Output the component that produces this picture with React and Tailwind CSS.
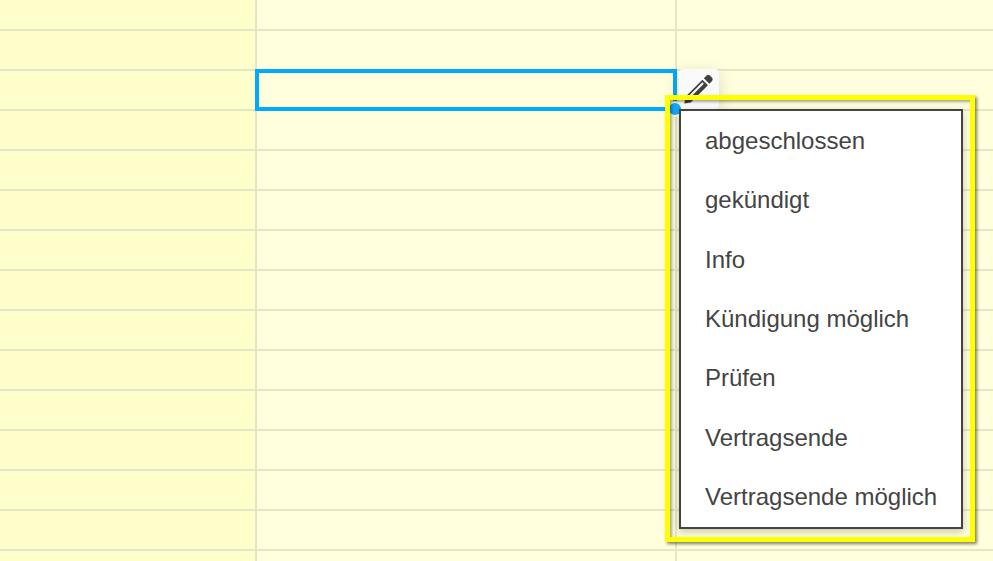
const options = [
  'abgeschlossen',
  'gekündigt',
  'Info',
  'Kündigung möglich',
  'Prüfen',
  'Vertragsende',
  'Vertragsende möglich',
];

const rows = Array.from({ length: 15 }, (_, i) => i);
const selectedRow = 2;

function PencilIcon() {
  return (
    <svg viewBox="0 0 40 40" className="h-10 w-10" fill="#404040">
      <path d="M24.9 9.2l2.8-2.7q1.6-1.3 3.1 0l2.3 2.3q1.3 1.6 0 3.1l-2.7 2.8z" />
      <path
        fillRule="evenodd"
        d="M23.4 10.7L28.9 16.2 11.7 33.4 5.4 34.4 6.2 27.9zM23.3 13.3L10.2 26.4l1.5 1.5L24.8 14.8z"
      />
    </svg>
  );
}

function OptionMenu() {
  return (
    <div className="absolute top-[26px] left-full z-10 -ml-3 pt-3.5 pr-3 pb-[13px] pl-3.5">
      <ul className="relative flex h-[420px] w-[284px] flex-col border-2 border-[#444444] bg-white shadow-[0_3px_8px_rgba(0,0,0,0.22)]">
        {options.map((option) => (
          <li
            key={option}
            className="flex flex-1 items-center pl-6 text-2xl leading-none whitespace-nowrap text-[#444444]"
          >
            {option}
          </li>
        ))}
      </ul>
      <div className="pointer-events-none absolute inset-0 border-[5px] border-[#ffff00] shadow-[2px_2px_3px_rgba(0,0,0,0.5),inset_2px_2px_3px_rgba(0,0,0,0.35)]" />
    </div>
  );
}

function Selection() {
  return (
    <div className="absolute -top-0.5 -right-0.5 -bottom-0.5 -left-0.5">
      <div className="h-full border-4 border-[#00aaff]" />
      <button
        aria-label="Bearbeiten"
        className="absolute top-0 left-full ml-0.5 h-10 w-10 rounded bg-[#fafafa] shadow-[0_4px_16px_rgba(0,0,0,0.15)]"
      >
        <PencilIcon />
      </button>
      <span className="absolute -right-1 -bottom-1 h-3 w-3 rounded-full bg-[#11a7fa] ring-2 ring-[#ffffdd]" />
      <OptionMenu />
    </div>
  );
}

export default function App() {
  return (
    <div className="h-[561px] w-[993px] overflow-hidden bg-[#ffffdd] font-['Liberation_Sans',Arial,sans-serif]">
      <div className="flex flex-col">
        {rows.map((row) => (
          <div
            key={row}
            className={`grid shrink-0 grid-cols-[257px_420px_1fr] ${row === 0 ? 'h-[31px]' : 'h-10'}`}
          >
            <div className="border-r-2 border-b-2 border-[#e6e6c7] bg-[#ffffcc]" />
            {row === selectedRow ? (
              <div className="relative border-r-2 border-b-2 border-[#e6e6c7]">
                <Selection />
              </div>
            ) : (
              <div className="border-r-2 border-b-2 border-[#e6e6c7]" />
            )}
            <div className="border-b-2 border-[#e6e6c7]" />
          </div>
        ))}
      </div>
    </div>
  );
}
